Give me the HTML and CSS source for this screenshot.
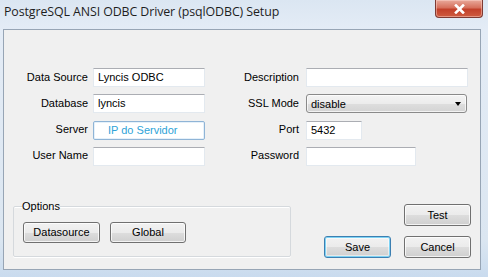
FILE: index.html
```html
<!DOCTYPE html>
<html>
<head>
<meta charset="utf-8">
<link rel="stylesheet" href="styles.css">
</head>
<body>
<div class="window">
  <div class="titlebar">
    <span class="title">PostgreSQL ANSI ODBC Driver (psqlODBC) Setup</span>
    <div class="close">
      <svg width="13" height="10" viewBox="0 0 13 10"><path d="M3 1.5 L10 8.5 M10 1.5 L3 8.5" stroke="#fff" stroke-width="2.6" stroke-linecap="square"/></svg>
    </div>
  </div>
  <div class="client">
    <div class="form">
      <div class="col left">
        <span class="lbl">Data Source</span><div class="field w112">Lyncis ODBC</div>
        <span class="lbl">Database</span><div class="field w112">lyncis</div>
        <span class="lbl">Server</span><div class="field w112 focus"><span class="hint">IP do Servidor</span></div>
        <span class="lbl">User Name</span><div class="field w112"></div>
      </div>
      <div class="col right">
        <span class="lbl">Description</span><div class="field w162"></div>
        <span class="lbl">SSL Mode</span><div class="combo w161"><span>disable</span><span class="arrow"></span></div>
        <span class="lbl">Port</span><div class="field w56">5432</div>
        <span class="lbl">Password</span><div class="field w110"></div>
      </div>
    </div>
    <div class="bottom">
      <fieldset class="group">
        <legend>Options</legend>
        <div class="group-buttons">
          <div class="btn w77">Datasource</div>
          <div class="btn w76">Global</div>
        </div>
      </fieldset>
      <div class="actions">
        <div class="btn test">Test</div>
        <div class="btn default">Save</div>
        <div class="btn">Cancel</div>
      </div>
    </div>
  </div>
</div>
</body>
</html>
```
FILE: styles.css
```css
html, body {
  margin: 0;
  padding: 0;
}
body {
  width: 488px;
  height: 277px;
  overflow: hidden;
  font-family: "Liberation Sans", Arial, sans-serif;
  font-size: 11px;
  color: #000;
}
.window {
  width: 488px;
  height: 277px;
  display: flex;
  flex-direction: column;
  background: linear-gradient(to bottom, #dbe6f2 0%, #e4ecf6 30px, #dbe6f1 240px, #c9dbee 100%);
}
.titlebar {
  height: 29px;
  display: flex;
  justify-content: space-between;
  align-items: flex-start;
  padding: 0 5px 0 4px;
  box-sizing: border-box;
}
.title {
  font-family: "Open Sans", "Liberation Sans", sans-serif;
  font-size: 12.4px;
  line-height: 16px;
  padding-top: 4px;
  color: #1e1e1e;
  letter-spacing: -0.1px;
}
.close {
  width: 48px;
  height: 18px;
  box-sizing: border-box;
  border: 1px solid #7e3a33;
  border-top: none;
  border-radius: 0 0 4px 4px;
  background: linear-gradient(to bottom, #e9a99b 0%, #d6705c 45%, #c2402a 55%, #cf5b40 100%);
  box-shadow: inset 0 0 0 1px rgba(255,220,210,0.45);
  display: flex;
  align-items: center;
  justify-content: center;
}
.client {
  margin: 0 7px 0 3px;
  height: 241px;
  box-sizing: border-box;
  border: 1px solid #97a5b5;
  background: #f0f0f0;
  padding-top: 38px;
}
.form {
  display: flex;
}
.col {
  display: grid;
  grid-auto-rows: 19px;
  row-gap: 7.3px;
  align-items: center;
}
.left {
  grid-template-columns: 84px 113px;
  column-gap: 5px;
}
.right {
  margin-left: 33px;
  grid-template-columns: 60px 162px;
  column-gap: 7px;
}
.lbl {
  text-align: right;
  white-space: nowrap;
  line-height: 13px;
  margin-top: -1px;
}
.field {
  height: 19px;
  box-sizing: border-box;
  background: #fff;
  border: 1px solid #e3e9ef;
  border-top-color: #abadb3;
  padding: 0 4px;
  line-height: 17px;
  white-space: nowrap;
}
.w112 { width: 112px; }
.w162 { width: 162px; }
.w161 { width: 161px; }
.w56 { width: 56px; }
.w110 { width: 110px; }
.focus {
  border: 1px solid #8fb4d6;
  border-radius: 2px;
  box-shadow: inset 0 0 0 1px #e6f1fa;
  padding-left: 14px;
}
.hint {
  color: #2ea3d8;
}
.combo {
  height: 19px;
  box-sizing: border-box;
  border: 1px solid #8a8a8a;
  border-radius: 3px;
  background: linear-gradient(to bottom, #f4f4f4 0%, #ececec 50%, #dedede 51%, #d4d4d4 100%);
  box-shadow: inset 0 0 0 1px rgba(255,255,255,0.7);
  display: flex;
  align-items: center;
  justify-content: space-between;
  padding: 0 5px 0 4px;
}
.arrow {
  width: 0;
  height: 0;
  border-left: 3.5px solid transparent;
  border-right: 3.5px solid transparent;
  border-top: 4px solid #000;
}
.bottom {
  display: flex;
  align-items: flex-start;
  margin-top: 34px;
}
.group {
  margin: 0 0 0 9px;
  width: 278px;
  box-sizing: border-box;
  border: 1px solid #d5d9dd;
  border-radius: 2px;
  box-shadow: 0 1px 0 #fff, inset 0 1px 0 #fff;
  padding: 9px 0 13px 9px;
}
.group legend {
  padding: 0;
  margin-left: -1px;
  line-height: 13px;
}
.group-buttons {
  display: flex;
  gap: 10px;
}
.btn {
  height: 22px;
  box-sizing: border-box;
  border: 1px solid #707070;
  border-radius: 3px;
  background: linear-gradient(to bottom, #f2f2f2 0%, #ebebeb 50%, #dddddd 51%, #cfcfcf 100%);
  box-shadow: inset 0 0 0 1px rgba(255,255,255,0.75);
  display: flex;
  align-items: center;
  justify-content: center;
  white-space: nowrap;
}
.w77 { width: 77px; height: 21px; }
.w76 { width: 76px; height: 21px; }
.actions {
  margin-left: 33px;
  margin-top: 4px;
  display: grid;
  grid-template-columns: 67px 67px;
  grid-auto-rows: 22px;
  column-gap: 13px;
  row-gap: 10px;
}
.test {
  grid-column: 2;
}
.default {
  border-color: #3c7fb1;
  box-shadow: inset 0 0 0 1px #7fd3f4, inset 0 0 0 2px rgba(255,255,255,0.5);
}
```
